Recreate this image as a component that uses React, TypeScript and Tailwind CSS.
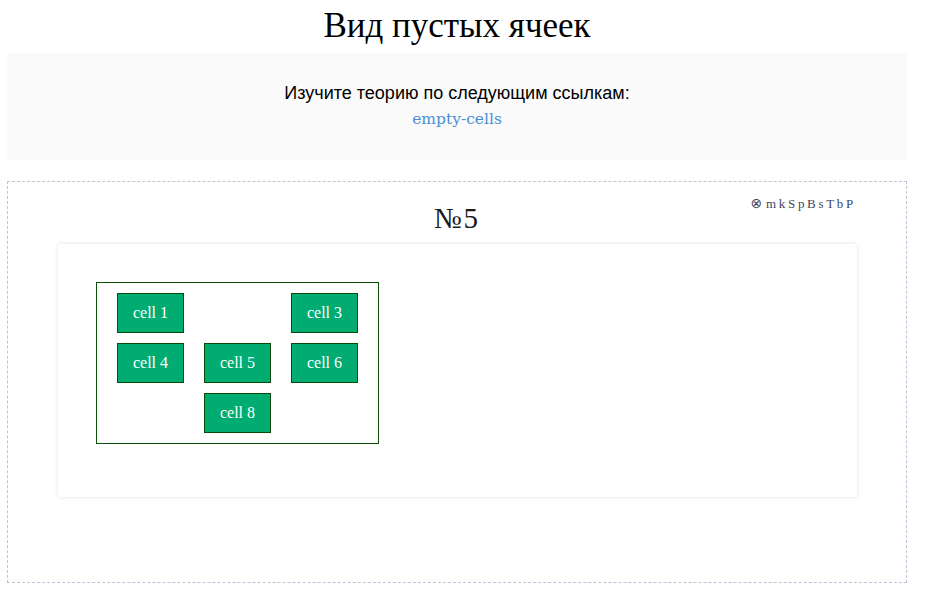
import React from "react";

const serif = { fontFamily: '"Liberation Serif", "DejaVu Serif", serif' };

function Cell({ text }: { text?: string }) {
  if (!text) return <td className="w-[67px] h-[40px] p-0"></td>;
  return (
    <td className="w-[67px] h-[40px] p-0 bg-[#00ac72] border border-[#0b4a0b] text-white text-[16px] text-center align-middle">
      {text}
    </td>
  );
}

export default function App() {
  return (
    <div className="w-[936px] h-[600px] bg-white overflow-hidden" style={serif}>
      <h1 className="mx-[7px] w-[900px] text-center text-[35px] leading-[40px] text-black pt-[6px] h-[53px] font-normal">
        Вид пустых ячеек
      </h1>
      <div className="mx-[7px] w-[900px] h-[107px] bg-[#fafafa] flex flex-col items-center pt-[28px]">
        <div
          className="text-[18px] leading-[24px] text-black"
          style={{ fontFamily: '"Liberation Sans", Arial, sans-serif' }}
        >
          Изучите теорию по следующим ссылкам:
        </div>
        <div
          className="text-[15.5px] leading-[22px] mt-[3px] text-[#4a8fd6]"
          style={{ fontFamily: '"DejaVu Serif", serif' }}
        >
          empty-cells
        </div>
      </div>
      <div className="mx-[7px] mt-[21px] w-[900px] h-[402px] border border-dashed border-[#c4c0d8] relative">
        <div className="absolute right-[50px] top-[11px] text-[13px] tracking-[2.7px] text-[#3d4660] flex items-center">
          <span className="text-[14px] mr-[1px]" style={{ fontFamily: '"DejaVu Sans", sans-serif' }}>⊗</span>
          <span>mkSpBsTbP</span>
        </div>
        <div className="text-center text-[29px] leading-[34px] text-[#1a1a1a] pt-[19px] tracking-[2px]">№5</div>
        <div className="mx-[50px] mt-[9px] w-[799px] h-[253px] bg-white rounded-[3px] shadow-[0_0_4px_rgba(0,0,0,0.12)] pt-[38px] pl-[38px]">
          <table
            className="border border-[#0b4f0b]"
            style={{ borderCollapse: "separate", borderSpacing: "20px 10px" }}
          >
            <tbody>
              <tr>
                <Cell text="cell 1" />
                <Cell />
                <Cell text="cell 3" />
              </tr>
              <tr>
                <Cell text="cell 4" />
                <Cell text="cell 5" />
                <Cell text="cell 6" />
              </tr>
              <tr>
                <Cell />
                <Cell text="cell 8" />
                <Cell />
              </tr>
            </tbody>
          </table>
        </div>
      </div>
    </div>
  );
}
